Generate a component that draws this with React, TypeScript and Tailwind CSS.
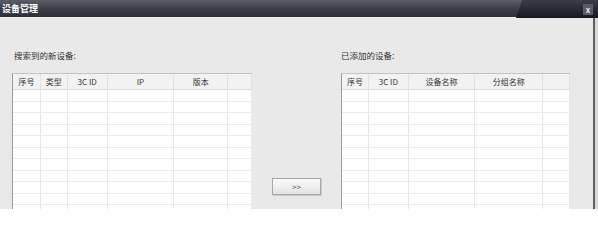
import React from "react";

const font = { fontFamily: '"Noto Sans CJK SC", "Liberation Sans", sans-serif' };

function Table({ cols, heads }: { cols: number[]; heads: string[] }) {
  const rows = Array.from({ length: 11 });
  return (
    <div className="flex flex-col border-l border-t border-l-[#9a9a9a] border-t-[#c4c4c4] bg-white">
      <div className="flex h-[16px] bg-[#f2f2f2] border-b border-[#dcdcdc]">
        {cols.map((w, i) => (
          <div
            key={i}
            className="flex items-center justify-center border-r border-[#e2e2e2] text-[8px] leading-none text-[#333]"
            style={{ width: w }}
          >
            {heads[i]}
          </div>
        ))}
      </div>
      {rows.map((_, r) => (
        <div key={r} className="flex h-[11.5px] border-b border-[#ececec]">
          {cols.map((w, i) => (
            <div key={i} className="border-r border-[#e8e8e8]" style={{ width: w }} />
          ))}
        </div>
      ))}
    </div>
  );
}

export default function App() {
  return (
    <div className="relative w-[598px] h-[209px] overflow-hidden bg-[#e9e9e9]" style={font}>
      {/* title bar */}
      <div className="relative flex h-[18px] items-center bg-gradient-to-b from-[#5b5e66] via-[#3d4048] to-[#2c2f37] border-b border-[#f4f4f4]">
        <span className="pl-[2px] text-[9px] font-bold text-white leading-none">设备管理</span>
        <div className="absolute right-0 top-0 h-[18px] w-[82px] bg-gradient-to-b from-[#3a3d46] to-[#161922] [clip-path:polygon(6px_0,100%_0,100%_100%,0_100%)]" />
        <div className="absolute right-[5px] top-[4px] flex h-[11px] w-[10px] items-center justify-center bg-[#585b62] text-[8px] font-bold leading-none text-[#e8e8e8]">
          x
        </div>
      </div>
      {/* body */}
      <div className="flex h-[191px]">
        <div className="flex flex-1">
          <div className="ml-[12px] flex w-[240px] flex-col">
            <div className="mt-[31px] h-[12px] pl-[2px] text-[8.5px] leading-[12px] text-[#333]">搜索到的新设备:</div>
            <div className="mt-[12px]">
              <Table cols={[28, 27, 40, 67, 54, 24]} heads={["序号", "类型", "3C ID", "IP", "版本", ""]} />
            </div>
          </div>
          <div className="ml-[20px] w-[69px]">
            <button className="mt-[160px] flex h-[17px] w-[49px] items-center justify-center border border-[#a8a8a8] bg-gradient-to-b from-[#fbfbfb] to-[#e4e4e4] text-[8px] leading-none text-[#444] shadow-[1px_1px_0_#c8c8c8]">
              &gt;&gt;
            </button>
          </div>
          <div className="flex w-[229px] flex-col">
            <div className="mt-[31px] h-[12px] text-[8.5px] leading-[12px] text-[#333]">已添加的设备:</div>
            <div className="mt-[12px]">
              <Table cols={[27, 40, 67, 68, 27]} heads={["序号", "3C ID", "设备名称", "分组名称", ""]} />
            </div>
          </div>
        </div>
        <div className="ml-[23px] w-[2px] bg-[#5e5e5e]" />
        <div className="w-[3px] bg-[#d8d8d8]" />
      </div>
    </div>
  );
}
